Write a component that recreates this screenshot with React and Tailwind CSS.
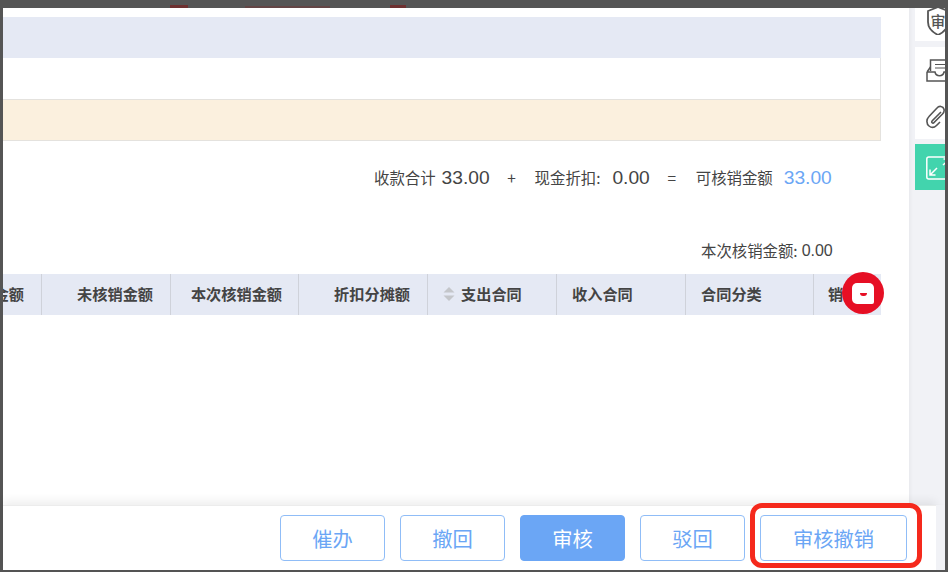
import React from 'react';

const columns = [
  { label: '销金额', width: 'w-[39px]', align: 'justify-end pr-[17px]' },
  { label: '未核销金额', width: 'w-[129px]', align: 'justify-end pr-[17px]' },
  { label: '本次核销金额', width: 'w-[128px]', align: 'justify-end pr-4' },
  { label: '折扣分摊额', width: 'w-[129px]', align: 'justify-end pr-[17px]' },
  { label: '支出合同', width: 'w-[129px]', align: 'justify-start pl-[15px]', sort: true },
  { label: '收入合同', width: 'w-[129px]', align: 'justify-start pl-[15px]' },
  { label: '合同分类', width: 'w-[128px]', align: 'justify-start pl-[15px]' },
  { label: '销', width: 'w-[67px]', align: 'justify-start pl-3.5', last: true },
];

const buttons = [
  { label: '催办', width: 'w-[105px]' },
  { label: '撤回', width: 'w-[105px]' },
  { label: '审核', width: 'w-[105px]', primary: true },
  { label: '驳回', width: 'w-[105px]' },
  { label: '审核撤销', width: 'w-[147px]' },
];

const SortIcon = () => (
  <svg width="12" height="18" viewBox="0 0 12 18" className="mr-[6px] shrink-0">
    <path d="M6 2 L11.5 7.5 L0.5 7.5 Z" fill="#c4c6ca" />
    <path d="M6 16 L11.5 10.5 L0.5 10.5 Z" fill="#c4c6ca" />
  </svg>
);

const App = () => {
  return (
    <div className="relative w-[948px] h-[572px] overflow-hidden bg-[#555555] flex flex-col text-[#444444] font-['Noto_Sans_CJK_SC','Noto_Sans',sans-serif]">
      {/* blurred page behind the dialog */}
      <div className="h-2 shrink-0 flex items-end pl-[170px]">
        <span className="w-[18px] h-[3px] bg-[#6e3030]" />
        <span className="w-[85px] h-[2px] ml-[57px] bg-[#634545]" />
        <span className="w-[16px] h-[3px] ml-[60px] bg-[#6e3030]" />
      </div>

      <div className="flex-1 min-h-0 flex pl-[3px] pr-[3px]">
        {/* content */}
        <div className="w-[906px] bg-white flex flex-col pt-[9px]">
          <div className="w-[878px]">
            <div className="h-[41px] bg-[#e5e9f4]" />
            <div className="h-[41px] border-r border-[#e4e4e4]" />
            <div className="h-[42px] bg-[#fbf0de] border-y border-r border-[#e4e2de]" />
          </div>

          <div className="w-[878px] flex items-center h-[26px] mt-[24px] pl-[371px] text-[15.4px] whitespace-nowrap">
            <span>收款合计</span>
            <span className="ml-[6px] text-[19.2px] font-['Liberation_Sans',sans-serif]">33.00</span>
            <span className="ml-[17px] w-[10px] text-center">+</span>
            <span className="ml-[18px]">现金折扣:</span>
            <span className="ml-[12px] text-[19.2px] font-['Liberation_Sans',sans-serif]">0.00</span>
            <span className="ml-[17px] w-[10px] text-center">=</span>
            <span className="ml-[19px]">可核销金额</span>
            <span className="ml-[11px] text-[19.2px] text-[#6ba6f5] font-['Liberation_Sans',sans-serif]">33.00</span>
          </div>

          <div className="w-[878px] mt-[49px] pl-[698px] h-[22px] flex items-center text-[15.4px] whitespace-nowrap">
            <span>本次核销金额:</span>
            <span className="ml-[4px] text-[16px] font-['Liberation_Sans',sans-serif]">0.00</span>
          </div>

          <div className="w-[878px] h-[41px] mt-[12px] flex bg-[#e5e9f4] text-[15.2px] font-semibold overflow-hidden">
            {columns.map((col) => (
              <div
                key={col.label}
                className={`${col.width} ${col.align} shrink-0 flex items-center pb-[2px] whitespace-nowrap ${col.last ? '' : 'border-r border-[#cfd2da]'}`}
              >
                {col.sort && <SortIcon />}
                {col.label}
              </div>
            ))}
          </div>
        </div>

        {/* side tools */}
        <div className="w-[36px] bg-[#f1f2f6] pl-[6px] flex flex-col shadow-[inset_3px_0_4px_-2px_rgba(0,0,0,0.05)]">
          <div className="h-[33px] bg-white overflow-hidden relative shrink-0">
            <svg width="24" height="28" viewBox="0 0 24 28" className="absolute left-[12px] top-[-1px]" fill="none" stroke="#555" strokeWidth="1.8">
              <path d="M11 0 L21 4 V15 C21 22 15 26 11 28 C7 26 1 22 1 15 V4 Z" />
            </svg>
            <span className="absolute left-[15.5px] top-[1px] text-[15px] leading-[24px] font-medium text-[#555555]">审</span>
          </div>
          <div className="h-[92px] mt-[6px] bg-white overflow-hidden shrink-0 flex flex-col pl-[11px] pt-[11px]">
            <svg width="24" height="24" viewBox="0 0 24 24" fill="none" stroke="#555" strokeWidth="1.5">
              <path d="M4.5 13 V2 H24" />
              <path d="M9 6.5 H24 M9 10 H24" strokeWidth="1.2" />
              <path d="M1 14 H9 C10 19 17 19 18 14 H24 M1 14 L4.5 9 M1 14 V23 H24" />
            </svg>
            <svg width="20" height="24" viewBox="0 0 20 24" fill="none" stroke="#555" strokeWidth="1.6" className="mt-[23px]">
              <path d="M15 7 L6.5 15.5 C5 17 6 18.5 7.5 18 L16.5 9 C19.5 6 18 2 15 1.5 C13.5 1.2 12 1.8 11 3 L3 11.5 C0 14.5 0.5 19 3 21 C5.5 23 8.5 22.5 10.5 20.5 L14 17" />
            </svg>
          </div>
          <div className="h-[46px] mt-[5px] bg-[#42d4ad] overflow-hidden shrink-0 pl-[11px] pt-[12px]">
            <svg width="24" height="24" viewBox="0 0 24 24" fill="none" stroke="#ffffff" strokeWidth="1.5">
              <rect x="0.8" y="1" width="30" height="22" rx="2" />
              <path d="M4 19 L11 12 M4 13.5 V19 H9.5 M17 9 L23 3.5 M17.5 3 H23.5 V8" />
            </svg>
          </div>
        </div>
      </div>

      {/* footer */}
      <div className="h-[66px] shrink-0 flex pl-[3px] pr-[3px] mb-px">
        <div className="w-[933px] h-[65px] bg-white border-t border-[#ececec] shadow-[0_-4px_9px_rgba(0,0,0,0.07)] flex justify-end gap-[15px] pt-[9px] pr-[29px]">
          {buttons.map((btn) => (
            <button
              key={btn.label}
              className={`${btn.width} h-[46px] rounded-[4px] border text-[20.3px] ${btn.primary ? 'bg-[#6ba6f5] border-[#6ba6f5] text-white' : 'bg-white border-[#90bdf7] text-[#6ba6f5]'}`}
            >
              {btn.label}
            </button>
          ))}
        </div>
        <div className="w-[9px] bg-[#f1f2f6] h-[65px]" />
      </div>

      {/* chat bubble */}
      <div className="absolute left-[842px] top-[272px] w-[42px] h-[42px] rounded-full bg-[#e60f24] flex items-center justify-center">
        <div className="w-[22px] h-[21px] bg-white rounded-[5px] rounded-br-[2px] flex items-center justify-center">
          <span className="w-[7px] h-[3px] mt-[3px] bg-[#e60f24] rounded-b-full" />
        </div>
      </div>

      {/* annotation */}
      <div className="absolute left-[750px] top-[503px] w-[172px] h-[65px] rounded-[12px] border-[5px] border-[#f5291c]" />
    </div>
  );
};

export default App;
